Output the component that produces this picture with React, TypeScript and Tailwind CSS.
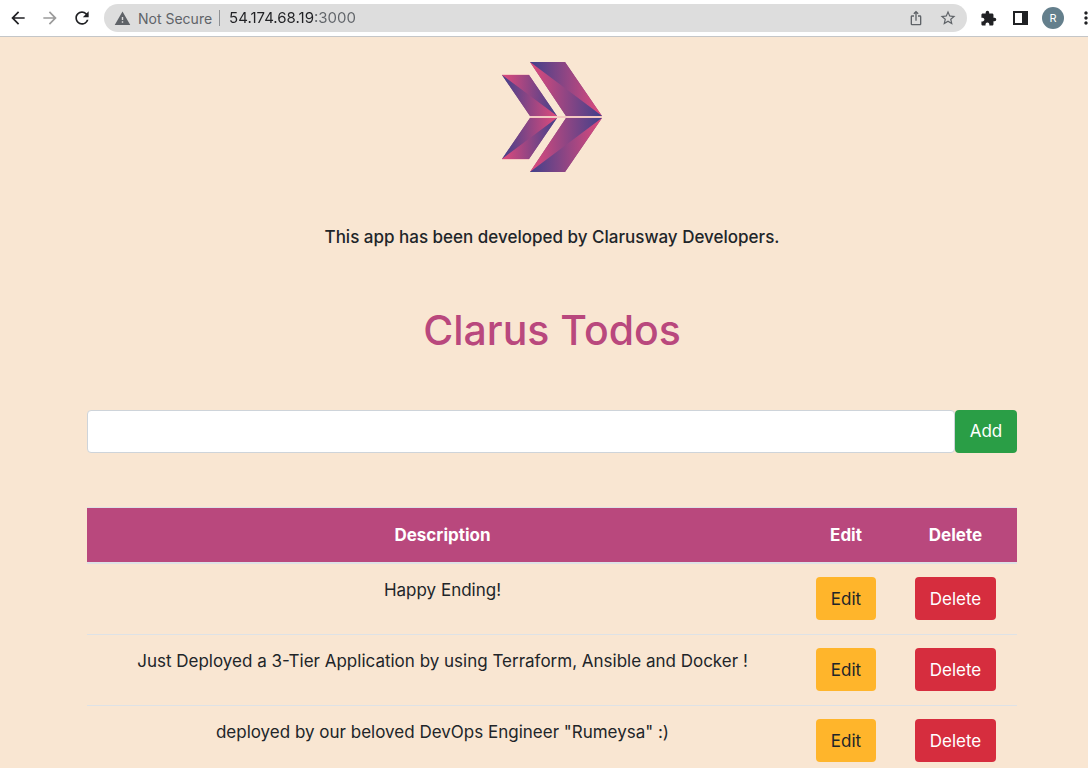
import { useState } from "react";
import {
  MdArrowBack,
  MdArrowForward,
  MdExtension,
  MdIosShare,
  MdMoreVert,
  MdRefresh,
  MdStarBorder,
  MdWarning,
} from "react-icons/md";

const initialTodos = [
  "Happy Ending!",
  "Just Deployed a 3-Tier Application by using Terraform, Ansible and Docker !",
  'deployed by our beloved DevOps Engineer "Rumeysa" :)',
];

function BrowserBar() {
  return (
    <header className="flex h-[37px] items-center overflow-hidden border-b border-[#c4c6c8] bg-white pl-2 text-[#202124]">
      <button aria-label="Back" className="mr-3 shrink-0">
        <MdArrowBack size={20} />
      </button>
      <button aria-label="Forward" className="mr-3 shrink-0 text-[#9b9b9b]">
        <MdArrowForward size={20} />
      </button>
      <button aria-label="Reload" className="mr-3 shrink-0">
        <MdRefresh size={20} />
      </button>
      <div className="flex h-7 min-w-0 flex-1 items-center rounded-full bg-[#dddddd] px-[10px] text-[14px] text-[#5f6368]">
        <MdWarning size={17} className="shrink-0" />
        <span className="ml-[7px] whitespace-nowrap">Not Secure</span>
        <span className="mx-[7px] h-4 w-px bg-[#8f9194]" />
        <input
          aria-label="Address"
          defaultValue="54.174.68.19:3000"
          className="ml-[2px] h-5 min-w-0 flex-1 bg-linear-[90deg,#202124_86px,#5f6368_86px] bg-clip-text text-[15px] text-transparent caret-[#202124] outline-none"
        />
        <button aria-label="Share" className="mr-[15px] shrink-0">
          <MdIosShare size={16} />
        </button>
        <button aria-label="Bookmark" className="shrink-0">
          <MdStarBorder size={18} />
        </button>
      </div>
      <button aria-label="Extensions" className="ml-[13px] shrink-0">
        <MdExtension size={17} />
      </button>
      <button aria-label="Side panel" className="ml-4 shrink-0">
        <svg width="15" height="14" viewBox="0 0 15 14">
          <path d="M0 0h15v14H0zM2 2v10h7V2z" fill="currentColor" fillRule="evenodd" />
        </svg>
      </button>
      <button
        aria-label="Profile"
        className="ml-[14px] flex size-[22px] shrink-0 items-center justify-center rounded-full bg-[#647f8c] text-[11px] text-white"
      >
        R
      </button>
      <button aria-label="Menu" className="-mr-2 ml-3 shrink-0">
        <MdMoreVert size={20} />
      </button>
    </header>
  );
}

function Logo() {
  return (
    <svg width="100" height="110" viewBox="0 0 100 110" role="img" aria-label="Clarusway">
      <defs>
        <linearGradient id="navyToPink">
          <stop offset="0" stopColor="#40418b" />
          <stop offset="1" stopColor="#e04a7c" />
        </linearGradient>
        <linearGradient id="pinkToNavy">
          <stop offset="0" stopColor="#e04a7c" />
          <stop offset="1" stopColor="#40418b" />
        </linearGradient>
      </defs>
      <path d="M28 0H63L100 54H64zM0 13H27L55 54H28zM28 56H55L27 97H0zM64 56H100L63 110H28z" fill="#904683" />
      <path d="M28 0H63L100 54z" fill="url(#navyToPink)" />
      <path d="M28 0L100 54H64z" fill="url(#pinkToNavy)" />
      <path d="M0 13H27L55 54z" fill="url(#pinkToNavy)" />
      <path d="M0 13L55 54H28z" fill="url(#navyToPink)" />
      <path d="M28 56H55L0 97z" fill="url(#navyToPink)" />
      <path d="M55 56L27 97H0z" fill="url(#pinkToNavy)" />
      <path d="M64 56H100L28 110z" fill="url(#pinkToNavy)" />
      <path d="M100 56L63 110H28z" fill="url(#navyToPink)" />
      <path d="M28 54.500H100M28 55.500H100M0 12.500H27M0 97.500H27" stroke="#e04a7c" strokeOpacity=".18" />
    </svg>
  );
}

export default function App() {
  const [todos, setTodos] = useState(initialTodos);
  const [draft, setDraft] = useState("");

  const add = () => {
    if (draft.trim()) {
      setTodos([...todos, draft.trim()]);
      setDraft("");
    }
  };

  return (
    <div className="flex h-screen flex-col overflow-hidden font-['Inter',sans-serif] text-[#212529]">
      <BrowserBar />
      <main className="min-h-0 flex-1 overflow-hidden bg-[#f9e6d2] pr-[71px] pl-[87px] text-[17px]">
        <div className="flex flex-col items-center pt-[25px]">
          <Logo />
          <p className="mt-[52px] leading-[26px] font-medium">This app has been developed by Clarusway Developers.</p>
          <h1 className="mt-[53px] text-[41px] leading-[54px] font-medium text-[#b9487d]">Clarus Todos</h1>
        </div>
        <form
          className="mt-[53px] flex"
          onSubmit={(event) => {
            event.preventDefault();
            add();
          }}
        >
          <input
            aria-label="New todo"
            value={draft}
            onChange={(event) => setDraft(event.target.value)}
            className="h-[43px] min-w-0 flex-1 rounded border border-[#ced4da] bg-white px-[13px] outline-none"
          />
          <button type="submit" className="h-[43px] w-[62px] rounded bg-[#2a9e46] text-white">
            Add
          </button>
        </form>
        <table className="mt-[54px] w-full table-fixed border-separate border-spacing-0 text-center leading-[26px]">
          <colgroup>
            <col />
            <col className="w-[96px]" />
            <col className="w-[123px]" />
          </colgroup>
          <thead>
            <tr className="bg-[#b9487d] text-white">
              {["Description", "Edit", "Delete"].map((heading) => (
                <th key={heading} className="border-t border-b-2 border-[#dee2e6] py-[14px] font-bold">
                  {heading}
                </th>
              ))}
            </tr>
          </thead>
          <tbody className="[&>tr:not(:first-child)>td]:border-t">
            {todos.map((todo, index) => (
              <tr key={index}>
                <td className="border-[#dee2e6] px-[13px] pt-[13px] pb-[14px] align-top">{todo}</td>
                <td className="border-[#dee2e6] pt-[13px] pb-[14px] align-top">
                  <button className="mx-auto block h-[43px] w-[60px] rounded bg-[#ffb52b]">Edit</button>
                </td>
                <td className="border-[#dee2e6] pt-[13px] pb-[14px] align-top">
                  <button
                    className="mx-auto block h-[43px] w-[81px] rounded bg-[#d62d3e] text-white"
                    onClick={() => setTodos(todos.filter((_, other) => other !== index))}
                  >
                    Delete
                  </button>
                </td>
              </tr>
            ))}
          </tbody>
        </table>
      </main>
    </div>
  );
}
